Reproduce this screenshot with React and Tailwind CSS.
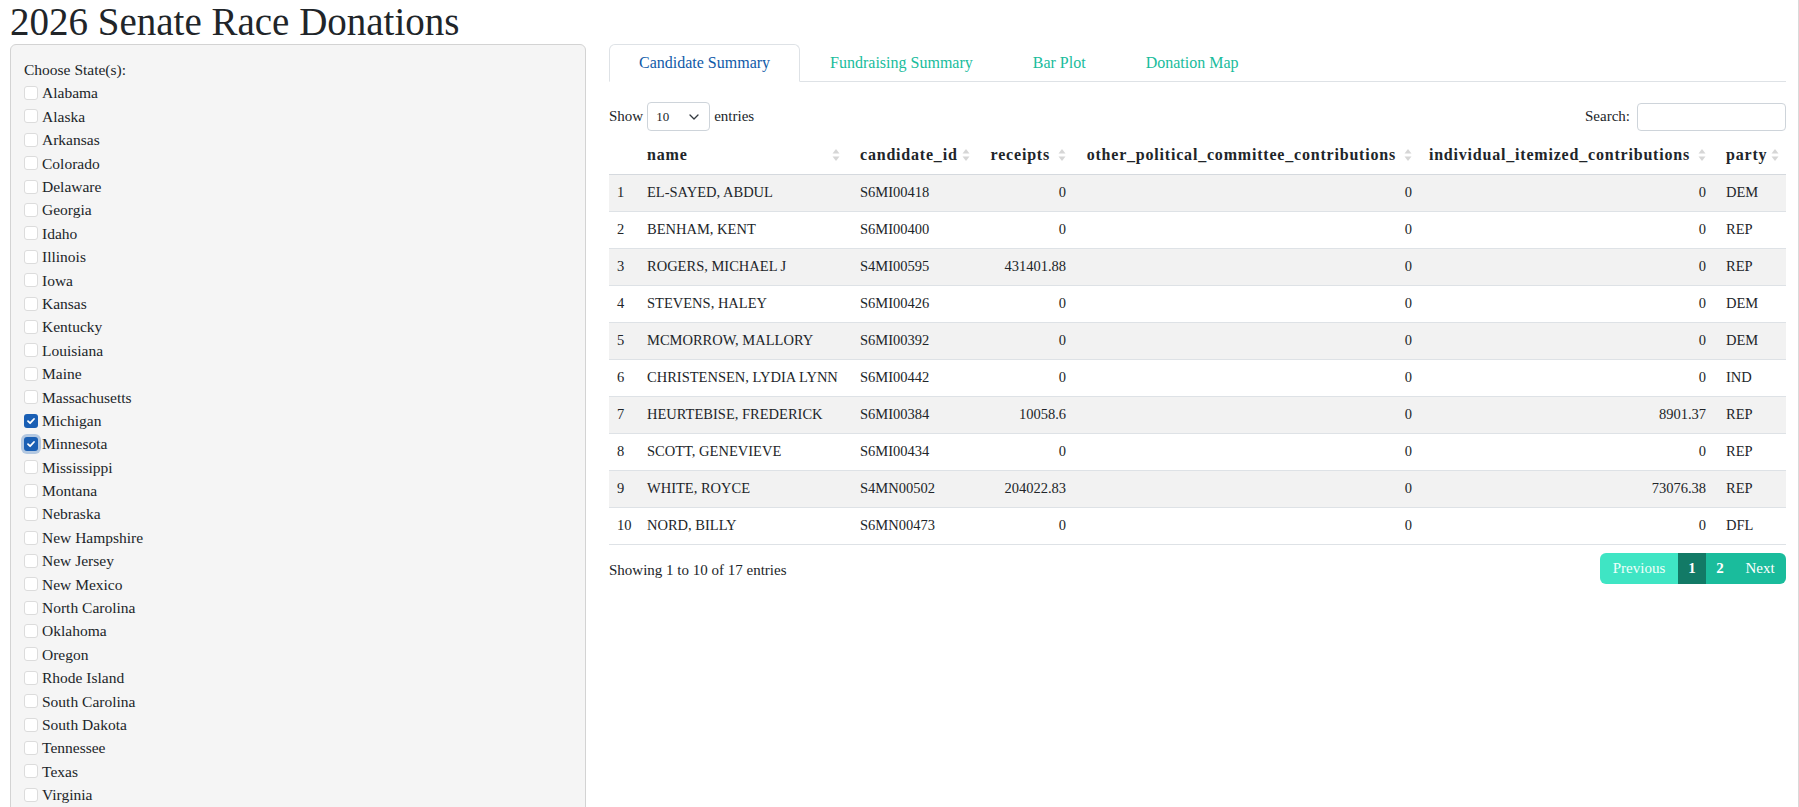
import React from 'react';

const STATES = [
  'Alabama', 'Alaska', 'Arkansas', 'Colorado', 'Delaware', 'Georgia', 'Idaho', 'Illinois',
  'Iowa', 'Kansas', 'Kentucky', 'Louisiana', 'Maine', 'Massachusetts', 'Michigan', 'Minnesota',
  'Mississippi', 'Montana', 'Nebraska', 'New Hampshire', 'New Jersey', 'New Mexico',
  'North Carolina', 'Oklahoma', 'Oregon', 'Rhode Island', 'South Carolina', 'South Dakota',
  'Tennessee', 'Texas', 'Virginia',
];

const CHECKED = ['Michigan', 'Minnesota'];

const ROWS = [
  ['EL-SAYED, ABDUL', 'S6MI00418', '0', '0', '0', 'DEM'],
  ['BENHAM, KENT', 'S6MI00400', '0', '0', '0', 'REP'],
  ['ROGERS, MICHAEL J', 'S4MI00595', '431401.88', '0', '0', 'REP'],
  ['STEVENS, HALEY', 'S6MI00426', '0', '0', '0', 'DEM'],
  ['MCMORROW, MALLORY', 'S6MI00392', '0', '0', '0', 'DEM'],
  ['CHRISTENSEN, LYDIA LYNN', 'S6MI00442', '0', '0', '0', 'IND'],
  ['HEURTEBISE, FREDERICK', 'S6MI00384', '10058.6', '0', '8901.37', 'REP'],
  ['SCOTT, GENEVIEVE', 'S6MI00434', '0', '0', '0', 'REP'],
  ['WHITE, ROYCE', 'S4MN00502', '204022.83', '0', '73076.38', 'REP'],
  ['NORD, BILLY', 'S6MN00473', '0', '0', '0', 'DFL'],
];

const COLS = [
  { label: 'name', num: false },
  { label: 'candidate_id', num: false },
  { label: 'receipts', num: true },
  { label: 'other_political_committee_contributions', num: true },
  { label: 'individual_itemized_contributions', num: true },
  { label: 'party', num: false },
];

function SortIcon() {
  return (
    <svg width="8" height="14" viewBox="0 0 8 14" className="shrink-0">
      <path d="M4 1L7.5 5.5H0.5Z" fill="#d6d6d6" />
      <path d="M4 13L0.5 8.5H7.5Z" fill="#d6d6d6" />
    </svg>
  );
}

function Checkbox({ checked, focused }) {
  if (checked) {
    return (
      <span
        className={
          'flex h-[14px] w-[14px] shrink-0 items-center justify-center rounded-[3px] bg-[#1a5fb4] ' +
          (focused ? 'shadow-[0_0_0_3px_rgba(26,95,180,0.3)]' : '')
        }
      >
        <svg width="10" height="10" viewBox="0 0 10 10">
          <path d="M2 5.2L4.1 7.2L8 3" stroke="#fff" strokeWidth="1.8" fill="none" strokeLinecap="round" strokeLinejoin="round" />
        </svg>
      </span>
    );
  }
  return <span className="h-[14px] w-[14px] shrink-0 rounded-[3px] border border-[#dcdcdc] bg-white" />;
}

export default function App() {
  return (
    <div className="h-screen overflow-hidden border-r border-[#d9d9d9] bg-white pl-[10px] pr-[12px] font-['Liberation_Serif',serif] text-[#212529]">
      <h2 className="text-[39px] font-normal leading-[44px]">2026 Senate Race Donations</h2>

      <div className="flex items-start gap-[23px]">
        {/* sidebar */}
        <div className="w-[576px] shrink-0 rounded-[6px] border border-[#d3d3d3] bg-[#f5f5f5] px-[13px] pb-[19px] pt-[13px]">
          <div className="h-[23.4px] text-[15.5px] leading-[23.4px]">Choose State(s):</div>
          {STATES.map((s) => (
            <label key={s} className="flex h-[23.4px] items-center gap-[4px] text-[15.5px]">
              <Checkbox checked={CHECKED.includes(s)} focused={s === 'Minnesota'} />
              <span>{s}</span>
            </label>
          ))}
        </div>

        {/* main */}
        <div className="min-w-0 flex-1">
          <div className="flex border-b border-[#dee2e6] text-[16px]">
            <div className="-mb-px flex h-[38px] items-center rounded-t-[6px] border border-[#dee2e6] border-b-white bg-white px-[29px] text-[#0f5aa8]">
              Candidate Summary
            </div>
            <div className="flex h-[37px] items-center px-[30px] text-[#18bc9c]">Fundraising Summary</div>
            <div className="flex h-[37px] items-center px-[30px] text-[#18bc9c]">Bar Plot</div>
            <div className="flex h-[37px] items-center px-[30px] text-[#18bc9c]">Donation Map</div>
          </div>

          <div className="mt-[20px] flex h-[29px] items-center justify-between text-[15px]">
            <div className="flex items-center">
              <span>Show</span>
              <div className="mx-[4px] flex h-[29px] w-[63px] items-center justify-between rounded-[4px] border border-[#ced4da] bg-white pl-[8px] pr-[10px] text-[13px]">
                <span>10</span>
                <svg width="10" height="6" viewBox="0 0 10 6">
                  <path d="M1 1L5 5L9 1" stroke="#343a40" strokeWidth="1.3" fill="none" strokeLinecap="round" strokeLinejoin="round" />
                </svg>
              </div>
              <span>entries</span>
            </div>
            <div className="flex items-center">
              <span>Search:</span>
              <div className="ml-[7px] h-[28px] w-[149px] rounded-[4px] border border-[#ced4da] bg-white" />
            </div>
          </div>

          <table className="mt-[5px] w-full table-fixed border-collapse text-[14.5px]">
            <colgroup>
              <col className="w-[28px]" />
              <col className="w-[213px]" />
              <col className="w-[130px]" />
              <col className="w-[96px]" />
              <col className="w-[346px]" />
              <col className="w-[294px]" />
              <col className="w-[70px]" />
            </colgroup>
            <thead>
              <tr className="border-b border-[#d5d9de]">
                <th className="h-[38px]" />
                {COLS.map((c) => (
                  <th key={c.label} className="h-[38px] px-[10px] text-[16px] font-bold tracking-[0.8px]">
                    {c.num ? (
                      <div className="flex items-center justify-end gap-[8px]">
                        <span>{c.label}</span>
                        <SortIcon />
                      </div>
                    ) : (
                      <div className="flex items-center justify-between gap-[4px]">
                        <span>{c.label}</span>
                        <SortIcon />
                      </div>
                    )}
                  </th>
                ))}
              </tr>
            </thead>
            <tbody>
              {ROWS.map((r, i) => (
                <tr key={i} className={'border-b border-[#dee2e6] ' + (i % 2 === 0 ? 'bg-[#f2f2f2]' : 'bg-white')}>
                  <td className="h-[37px] pl-[8px] text-left">{i + 1}</td>
                  {r.map((v, j) => (
                    <td
                      key={j}
                      className={'h-[37px] whitespace-nowrap px-[10px] ' + (COLS[j].num ? 'text-right' : 'text-left')}
                    >
                      {v}
                    </td>
                  ))}
                </tr>
              ))}
            </tbody>
          </table>

          <div className="mt-[8px] flex items-center justify-between">
            <div className="pt-[4px] text-[15px]">Showing 1 to 10 of 17 entries</div>
            <div className="flex h-[31px] overflow-hidden rounded-[6px] text-[15px] text-white">
              <div className="flex w-[78px] items-center justify-center bg-[#3fe5c4] text-[#effffb]">Previous</div>
              <div className="flex w-[28px] items-center justify-center bg-[#127a66] font-bold">1</div>
              <div className="flex w-[28px] items-center justify-center bg-[#1abc9c] font-bold">2</div>
              <div className="flex w-[52px] items-center justify-center bg-[#1abc9c]">Next</div>
            </div>
          </div>
        </div>
      </div>
    </div>
  );
}
